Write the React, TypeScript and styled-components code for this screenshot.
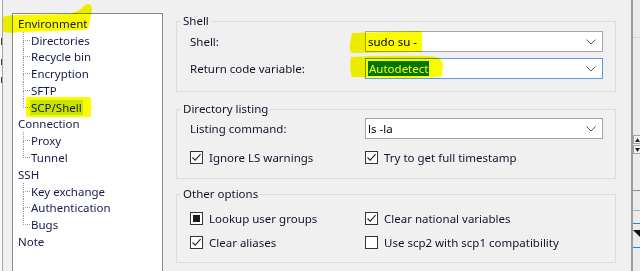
import React from "react";
import styled, { createGlobalStyle } from "styled-components";

const GlobalStyle = createGlobalStyle`
  html, body {
    margin: 0;
    padding: 0;
    background: #f0f0f0;
    overflow: hidden;
  }
  body {
    font-family: "Noto Sans", "DejaVu Sans", sans-serif;
    font-size: 11.5px;
    color: #10132c;
  }
`;

const Page = styled.div`
  position: relative;
  display: flex;
  width: 640px;
  height: 271px;
  overflow: hidden;
  background: #f0f0f0;
`;

const LeftEdge = styled.div`
  width: 2px;
  flex: none;
  background: #f7f7f7;
  border-right: 1px solid #a8a8a8;
  display: flex;
  flex-direction: column;
  align-items: flex-end;
`;

const Fragment = styled.span<{ $top: number; $h: number }>`
  display: block;
  width: 1px;
  height: ${(p) => p.$h}px;
  margin-top: ${(p) => p.$top}px;
  background: #4a3a2a;
`;

const Dialog = styled.div`
  flex: 1;
  display: flex;
  padding: 13px 15px 0 9px;
`;

const TreePanel = styled.div`
  width: 151px;
  height: 270px;
  flex: none;
  box-sizing: border-box;
  background: #fff;
  border: 1px solid #828790;
  margin-right: 13px;
  padding: 1px 0 0 0;
`;

const TreeRow = styled.div`
  height: 16.77px;
  display: flex;
  align-items: center;
  padding-left: 4px;
`;

const ChildRow = styled.div`
  height: 16.77px;
  display: flex;
  align-items: stretch;
  padding-left: 10px;
`;

const Connector = styled.span`
  width: 7px;
  flex: none;
  display: flex;
  flex-direction: column;
`;

const ConnectorTop = styled.span`
  flex: 1;
  border-left: 1px dotted #9a9a9a;
  border-bottom: 1px dotted #9a9a9a;
`;

const ConnectorBottom = styled.span<{ $last: boolean }>`
  flex: 1;
  border-left: 1px dotted ${(p) => (p.$last ? "transparent" : "#9a9a9a")};
`;

const NodeLabel = styled.span<{ $selected?: boolean }>`
  align-self: center;
  line-height: 15px;
  padding: 0 1px;
  white-space: nowrap;
  background: ${(p) => (p.$selected ? "#cce8ff" : "transparent")};
  color: #141a48;
`;

const Groups = styled.div`
  flex: 1;
  display: flex;
  flex-direction: column;
`;

const GroupBox = styled.fieldset<{ $gap: number; $pt: number; $pb: number }>`
  margin: ${(p) => p.$gap}px 0 0 0;
  padding: ${(p) => p.$pt}px 12px ${(p) => p.$pb}px 13px;
  border: 1px solid #dcdcdc;
  min-width: 0;
`;

const Legend = styled.legend`
  line-height: 16px;
  padding: 0 2px;
  margin-left: -9px;
`;

const FormGrid = styled.div<{ $rowGap: number }>`
  display: grid;
  grid-template-columns: 175px 1fr;
  row-gap: ${(p) => p.$rowGap}px;
  align-items: center;
`;

const FieldLabel = styled.span`
  line-height: 16px;
  white-space: nowrap;
`;

const Combo = styled.div<{ $focused?: boolean }>`
  height: 21px;
  box-sizing: border-box;
  border: 1px solid ${(p) => (p.$focused ? "#5a9be0" : "#a5a5a5")};
  background: #fff;
  display: flex;
  align-items: center;
  padding: 0 6px 0 2px;
`;

const ComboText = styled.span`
  flex: 1;
  display: flex;
  line-height: 15px;
  white-space: nowrap;
  color: #000;
`;

const Selection = styled.span`
  background: #0078d7;
  color: #fff;
  padding: 0 1px;
`;

const Chevron = () => (
  <svg width="10" height="6" viewBox="0 0 10 6">
    <polyline points="0.5,0.5 5,5 9.5,0.5" fill="none" stroke="#5c5c5c" strokeWidth="1" />
  </svg>
);

const CheckRow = styled.label`
  display: flex;
  align-items: center;
  height: 16px;
  gap: 6px;
  white-space: nowrap;
`;

const Box = styled.span`
  width: 13px;
  height: 13px;
  box-sizing: border-box;
  border: 1px solid #333;
  background: #fff;
  display: flex;
  align-items: center;
  justify-content: center;
  flex: none;
`;

const Mixed = styled.span`
  width: 7px;
  height: 7px;
  background: #1a1a1a;
`;

type CheckState = "on" | "off" | "mixed";

const CheckBox = ({ state, label }: { state: CheckState; label: string }) => (
  <CheckRow>
    <Box>
      {state === "on" && (
        <svg width="11" height="11" viewBox="0 0 11 11">
          <polyline points="1.5,5.5 4.2,8.2 9.6,2.2" fill="none" stroke="#222" strokeWidth="1.1" />
        </svg>
      )}
      {state === "mixed" && <Mixed />}
    </Box>
    <span>{label}</span>
  </CheckRow>
);

const RightEdge = styled.div`
  width: 9px;
  flex: none;
  display: flex;
`;

const EdgeLine = styled.div`
  width: 2px;
  background: #9c9c9c;
`;

const EdgeBody = styled.div`
  flex: 1;
  background: #ebebeb;
  display: flex;
  flex-direction: column;
`;

const EdgeRule = styled.div<{ $top: number; $color: string }>`
  margin-top: ${(p) => p.$top}px;
  height: 1px;
  background: ${(p) => p.$color};
`;

const Spin = styled.div`
  margin-top: 97px;
  display: flex;
  flex-direction: column;
  gap: 1px;
`;

const SpinPart = styled.div`
  height: 7px;
  border: 1px solid #a0a0a0;
  border-right: none;
  background: #f4f4f4;
  display: flex;
  align-items: center;
  padding-left: 1px;
`;

const Highlights = styled.svg`
  position: absolute;
  left: 0;
  top: 0;
  width: 640px;
  height: 271px;
  pointer-events: none;
  mix-blend-mode: multiply;
`;

const tree = [
  { label: "Environment", children: ["Directories", "Recycle bin", "Encryption", "SFTP", "SCP/Shell"] },
  { label: "Connection", children: ["Proxy", "Tunnel"] },
  { label: "SSH", children: ["Key exchange", "Authentication", "Bugs"] },
  { label: "Note", children: [] as string[] },
];

export default function App() {
  return (
    <>
      <GlobalStyle />
      <Page>
        <LeftEdge>
          <Fragment $top={38} $h={7} />
          <Fragment $top={14} $h={6} />
          <Fragment $top={12} $h={6} />
        </LeftEdge>
        <Dialog>
          <TreePanel>
            {tree.map((node) => (
              <React.Fragment key={node.label}>
                <TreeRow>
                  <NodeLabel>{node.label}</NodeLabel>
                </TreeRow>
                {node.children.map((child, i) => (
                  <ChildRow key={child}>
                    <Connector>
                      <ConnectorTop />
                      <ConnectorBottom $last={i === node.children.length - 1} />
                    </Connector>
                    <NodeLabel $selected={child === "SCP/Shell"}>{child}</NodeLabel>
                  </ChildRow>
                ))}
              </React.Fragment>
            ))}
          </TreePanel>
          <Groups>
            <GroupBox $gap={0} $pt={2} $pb={12}>
              <Legend>Shell</Legend>
              <FormGrid $rowGap={6}>
                <FieldLabel>Shell:</FieldLabel>
                <Combo>
                  <ComboText>sudo su -</ComboText>
                  <Chevron />
                </Combo>
                <FieldLabel>Return code variable:</FieldLabel>
                <Combo $focused>
                  <ComboText>
                    <Selection>Autodetect</Selection>
                  </ComboText>
                  <Chevron />
                </Combo>
              </FormGrid>
            </GroupBox>
            <GroupBox $gap={9} $pt={1} $pb={13}>
              <Legend>Directory listing</Legend>
              <FormGrid $rowGap={10}>
                <FieldLabel>Listing command:</FieldLabel>
                <Combo>
                  <ComboText>ls -la</ComboText>
                  <Chevron />
                </Combo>
                <CheckBox state="on" label="Ignore LS warnings" />
                <CheckBox state="on" label="Try to get full timestamp" />
              </FormGrid>
            </GroupBox>
            <GroupBox $gap={7} $pt={8} $pb={12}>
              <Legend>Other options</Legend>
              <FormGrid $rowGap={8}>
                <CheckBox state="mixed" label="Lookup user groups" />
                <CheckBox state="on" label="Clear national variables" />
                <CheckBox state="on" label="Clear aliases" />
                <CheckBox state="off" label="Use scp2 with scp1 compatibility" />
              </FormGrid>
            </GroupBox>
          </Groups>
        </Dialog>
        <RightEdge>
          <EdgeLine />
          <EdgeBody>
            <EdgeRule $top={37} $color="#d6d6d6" />
            <Spin>
              <SpinPart>
                <svg width="5" height="4" viewBox="0 0 5 4">
                  <polygon points="0,4 2.5,0 5,4" fill="#222" />
                </svg>
              </SpinPart>
              <SpinPart>
                <svg width="5" height="4" viewBox="0 0 5 4">
                  <polygon points="0,0 2.5,4 5,0" fill="#222" />
                </svg>
              </SpinPart>
            </Spin>
            <EdgeRule $top={36} $color="#8e8e8e" />
            <EdgeRule $top={19} $color="#b0b0b0" />
            <EdgeRule $top={12} $color="#3a7ad4" />
            <svg width="7" height="8" viewBox="0 0 7 8" style={{ marginTop: 6 }}>
              <polygon points="0,0 7,0 7,7" fill="#111" />
            </svg>
            <EdgeRule $top={9} $color="#3a7ad4" />
          </EdgeBody>
        </RightEdge>
        <Highlights viewBox="0 0 640 271">
          <path
            d="M3 17 Q5 15 20 15 L70 14 Q80 11 85 5 Q91 2 92 9 L90 22 Q89 29 84 30 L20 32 Q6 34 3 31 Z"
            fill="#fbfb00"
          />
          <rect x="26" y="97" width="65" height="20" rx="2" fill="#fbfb00" />
          <path d="M352 33 L420 31 Q423 32 422 40 L422 52 L352 53 Q349 52 350 43 Z" fill="#fbfb00" />
          <path
            d="M351 57 Q380 55 430 56 Q442 57 443 64 L442 76 Q430 78 400 78 L352 77 Q349 70 351 57 Z"
            fill="#fbfb00"
          />
        </Highlights>
      </Page>
    </>
  );
}
